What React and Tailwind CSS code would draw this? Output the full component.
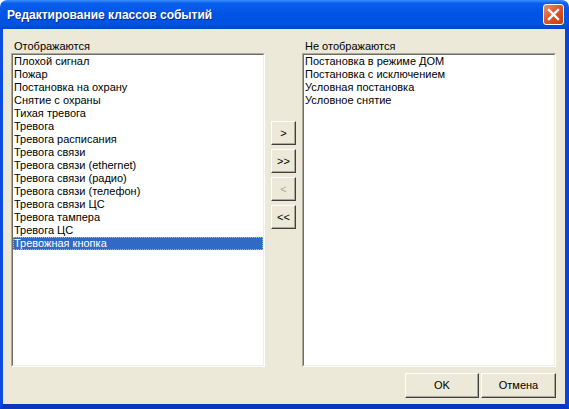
import React from 'react';

const shown = [
  'Плохой сигнал',
  'Пожар',
  'Постановка на охрану',
  'Снятие с охраны',
  'Тихая тревога',
  'Тревога',
  'Тревога расписания',
  'Тревога связи',
  'Тревога связи (ethernet)',
  'Тревога связи (радио)',
  'Тревога связи (телефон)',
  'Тревога связи ЦС',
  'Тревога тампера',
  'Тревога ЦС',
  'Тревожная кнопка',
];

const hidden = [
  'Постановка в режиме ДОМ',
  'Постановка с исключением',
  'Условная постановка',
  'Условное снятие',
];

const ListBox = ({ items, selected }) => (
  <div className="h-[314px] border border-t-[#ACA899] border-l-[#ACA899] border-r-white border-b-white">
    <div className="h-full bg-white border border-t-[#716F64] border-l-[#716F64] border-r-[#F1EFE2] border-b-[#F1EFE2]">
      {items.map((item) => (
        <div
          key={item}
          className={
            item === selected
              ? 'h-[13px] leading-[13px] pl-[1px] bg-[#316AC5] text-white outline outline-1 outline-dotted outline-[#D9B36A] -outline-offset-1'
              : 'h-[13px] leading-[13px] pl-[1px]'
          }
        >
          {item}
        </div>
      ))}
    </div>
  </div>
);

const Button = ({ children, className = '', disabled }) => (
  <button
    type="button"
    className={`flex items-center justify-center bg-[#ECE9D8] border border-t-white border-l-white border-r-[#404040] border-b-[#404040] shadow-[inset_-1px_-1px_0_#ACA899] ${disabled ? 'text-[#ACA899]' : 'text-black'} ${className}`}
  >
    {children}
  </button>
);

export default function App() {
  return (
    <div className="w-[569px] h-[409px] flex flex-col bg-white text-[11px] text-black font-['Liberation_Sans',Arial,sans-serif]">
      {/* Title bar */}
      <div className="h-[29px] shrink-0 rounded-t-[7px] flex items-center pl-[7px] pr-[5px] bg-[linear-gradient(to_bottom,#3A8CFF_0%,#0A5EEB_12%,#0055E5_45%,#0052E0_85%,#0044CC_100%)]">
        <span className="flex-1 text-white font-bold text-[12px] [text-shadow:1px_1px_0_#0A2A8A]">
          Редактирование классов событий
        </span>
        <div className="w-[21px] h-[21px] rounded-[3px] border border-white flex items-center justify-center bg-[linear-gradient(to_bottom_right,#F0906A,#DB5A2E_45%,#C43A0E)]">
          <svg width="13" height="13" viewBox="0 0 13 13">
            <path d="M2 2 L11 11 M11 2 L2 11" stroke="white" strokeWidth="2.4" strokeLinecap="square" />
          </svg>
        </div>
      </div>

      {/* Frame + client */}
      <div className="flex-1 flex flex-col border-l-[3px] border-r-[4px] border-b-[5px] border-l-[#0A4CE0] border-r-[#0A44D4] border-b-[#0838C0]">
        <div className="flex-1 bg-[#ECE9D8] flex flex-col pl-[8px] pr-[9px] pt-[10px]">
          <div className="flex">
            <div className="w-[254px] flex flex-col">
              <div className="h-[14px] leading-[15px] pl-[3px]">Отображаются</div>
              <ListBox items={shown} selected="Тревожная кнопка" />
            </div>

            <div className="w-[25px] mx-[6px] pt-[82px] flex flex-col gap-[4px]">
              <Button className="w-[25px] h-[24px]">&gt;</Button>
              <Button className="w-[25px] h-[24px]">&gt;&gt;</Button>
              <Button className="w-[25px] h-[24px]" disabled>&lt;</Button>
              <Button className="w-[25px] h-[24px]">&lt;&lt;</Button>
            </div>

            <div className="w-[254px] flex flex-col">
              <div className="h-[14px] leading-[15px] pl-[3px]">Не отображаются</div>
              <ListBox items={hidden} />
            </div>
          </div>

          <div className="mt-[6px] flex justify-end gap-[2px]">
            <Button className="w-[74px] h-[25px]">OK</Button>
            <Button className="w-[75px] h-[25px]">Отмена</Button>
          </div>
        </div>
      </div>
    </div>
  );
}
